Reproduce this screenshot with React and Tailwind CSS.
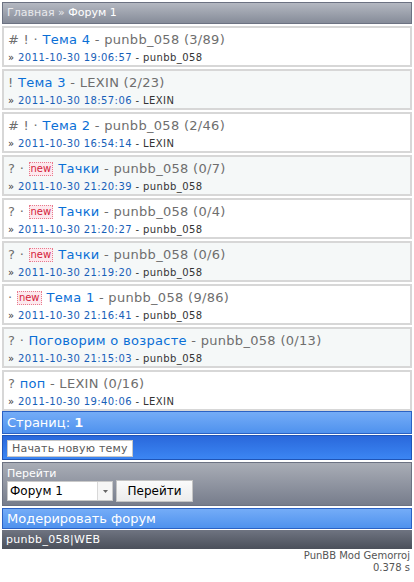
import React from "react";

const topics = [
  { pre: "# ! · ", title: "Тема 4", author: "punbb_058", count: "(3/89)", date: "2011-10-30 19:06:57", last: "punbb_058" },
  { pre: "! ", title: "Тема 3", author: "LEXIN", count: "(2/23)", date: "2011-10-30 18:57:06", last: "LEXIN" },
  { pre: "# ! · ", title: "Тема 2", author: "punbb_058", count: "(2/46)", date: "2011-10-30 16:54:14", last: "LEXIN" },
  { pre: "? · ", isNew: true, title: "Тачки", author: "punbb_058", count: "(0/7)", date: "2011-10-30 21:20:39", last: "punbb_058" },
  { pre: "? · ", isNew: true, title: "Тачки", author: "punbb_058", count: "(0/4)", date: "2011-10-30 21:20:27", last: "punbb_058" },
  { pre: "? · ", isNew: true, title: "Тачки", author: "punbb_058", count: "(0/6)", date: "2011-10-30 21:19:20", last: "punbb_058" },
  { pre: "· ", isNew: true, title: "Тема 1", author: "punbb_058", count: "(9/86)", date: "2011-10-30 21:16:41", last: "punbb_058" },
  { pre: "? · ", title: "Поговорим о возрасте", author: "punbb_058", count: "(0/13)", date: "2011-10-30 21:15:03", last: "punbb_058" },
  { pre: "? ", title: "поп", author: "LEXIN", count: "(0/16)", date: "2011-10-30 19:40:06", last: "LEXIN" },
];

function Row({ t, alt }) {
  return (
    <div className={`h-[41px] border-2 border-[#d7d7d7] px-[4px] pt-[1px] ${alt ? "bg-[#f5f8f8]" : "bg-white"}`}>
      <div className="h-[22px] flex items-center text-[13px] leading-[18px] tracking-[0.3px] text-[#6e6e6e] whitespace-pre">
        {t.pre}
        {t.isNew && (
          <span className="inline-block border border-dotted border-[#e87a8c] bg-[#fde9ee] text-[#d4213a] text-[10px] leading-[12px] tracking-normal px-[1px] mr-[5px]">
            new
          </span>
        )}
        <span className="text-[#0a6fd6]">{t.title}</span>
        {" - "}
        {t.author} {t.count}
      </div>
      <div className="text-[10px] leading-[14px] tracking-[0.4px] whitespace-nowrap">
        <span className="text-[#333]">» </span>
        <span className="text-[#1860b8]">{t.date}</span>
        <span className="text-[#333]"> - {t.last}</span>
      </div>
    </div>
  );
}

export default function App() {
  return (
    <div className="w-[414px] bg-white px-[2px] pt-[2px]" style={{ fontFamily: '"DejaVu Sans", Verdana, sans-serif' }}>
      <div className="h-[22px] border border-[#6c7282] bg-gradient-to-b from-[#b4b8c1] to-[#868c99] px-[4px] text-[11px] leading-[20px] text-[#e8e9ec] mb-[2px]">
        Главная » <span className="text-white">Форум 1</span>
      </div>
      <div className="flex flex-col gap-[2px]">
        {topics.map((t, i) => (
          <Row key={i} t={t} alt={i % 2 === 1} />
        ))}
      </div>
      <div className="h-[23px] border border-[#2b62c4] bg-gradient-to-b from-[#74acf7] to-[#4f92ee] px-[4px] text-[13px] leading-[21px] text-white">
        Страниц: <span className="font-bold">1</span>
      </div>
      <div className="mt-[1px] h-[25px] flex items-start border border-[#1f55b8] bg-gradient-to-b from-[#2a68db] to-[#3c86f3] px-[4px] pt-[4px]">
        <div className="h-[17px] border border-[#c8c8c8] bg-white px-[4px] text-[11px] leading-[15px] tracking-[0.2px] text-[#5a5a5a]">
          Начать новую тему
        </div>
      </div>
      <div className="mt-[2px] h-[44px] border border-[#6c7282] bg-gradient-to-b from-[#a9adb6] to-[#777d8c] px-[4px] pt-[4px]">
        <div className="text-[11px] leading-[14px] text-white">Перейти</div>
        <div className="flex gap-[3px] items-start">
          <div className="flex h-[20px] w-[106px] border border-[#c9c9c9] bg-white">
            <div className="flex-1 text-[12px] leading-[18px] pl-[2px] text-black">Форум 1</div>
            <div className="w-[15px] border-l border-[#d8d8d8] bg-[#f6f6f6] flex items-center justify-center">
              <svg width="5" height="3" viewBox="0 0 5 3"><path d="M0 0h5L2.5 3z" fill="#666" /></svg>
            </div>
          </div>
          <div className="-mt-[1px] h-[22px] w-[77px] border border-[#c4c4c4] bg-gradient-to-b from-[#fbfbfb] to-[#ececec] text-center text-[12px] leading-[20px] text-black">
            Перейти
          </div>
        </div>
      </div>
      <div className="mt-[2px] h-[21px] border border-[#2b62c4] bg-gradient-to-b from-[#74acf7] to-[#4f92ee] px-[4px] text-[13px] leading-[19px] text-white">
        Модерировать форум
      </div>
      <div className="mt-[1px] h-[19px] bg-gradient-to-b from-[#6f7481] to-[#4b505b] px-[4px] text-[11px] leading-[19px] tracking-[0.3px] text-white">
        punbb_058|WEB
      </div>
      <div className="pt-[1px] pr-[2px] text-right text-[10px] leading-[12px] text-[#555]">
        <div>PunBB Mod Gemorroj</div>
        <div>0.378 s</div>
      </div>
    </div>
  );
}
